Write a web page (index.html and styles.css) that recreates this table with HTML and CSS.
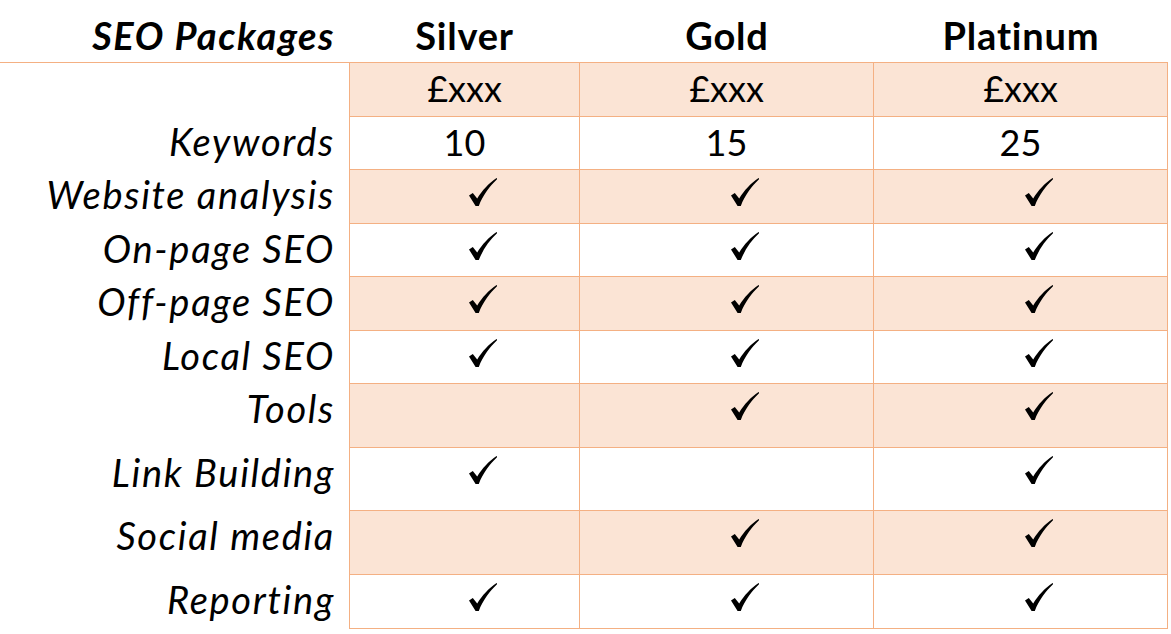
FILE: index.html
```html
<!DOCTYPE html>
<html lang="en">
<head>
<meta charset="utf-8">
<title>SEO Packages</title>
<link rel="stylesheet" href="styles.css">
</head>
<body>
<svg class="defs" width="0" height="0" aria-hidden="true">
  <symbol id="tick" viewBox="0 0 28 28">
    <path d="M0 17.5 L3.8 15 L8.2 20.6 C13 12.5 20 5 27.6 0 L28.4 1 C21 7.8 14.2 16.8 9.8 28 L6.6 28 Z"/>
  </symbol>
</svg>
<table class="pricing">
  <colgroup>
    <col class="col-label">
    <col class="col-silver">
    <col class="col-gold">
    <col class="col-platinum">
  </colgroup>
  <thead>
    <tr class="head">
      <th class="label">SEO Packages</th>
      <th class="plan c1">Silver</th>
      <th class="plan">Gold</th>
      <th class="plan">Platinum</th>
    </tr>
  </thead>
  <tbody>
    <tr class="row shade">
      <td class="label"></td>
      <td class="val c1">£xxx</td><td class="val">£xxx</td><td class="val">£xxx</td>
    </tr>
    <tr class="row">
      <td class="label">Keywords</td>
      <td class="val c1">10</td><td class="val">15</td><td class="val">25</td>
    </tr>
    <tr class="row shade">
      <td class="label">Website analysis</td>
      <td class="val c1"><svg class="check"><use href="#tick"/></svg></td>
      <td class="val"><svg class="check"><use href="#tick"/></svg></td>
      <td class="val"><svg class="check"><use href="#tick"/></svg></td>
    </tr>
    <tr class="row">
      <td class="label">On-page SEO</td>
      <td class="val c1"><svg class="check"><use href="#tick"/></svg></td>
      <td class="val"><svg class="check"><use href="#tick"/></svg></td>
      <td class="val"><svg class="check"><use href="#tick"/></svg></td>
    </tr>
    <tr class="row shade">
      <td class="label">Off-page SEO</td>
      <td class="val c1"><svg class="check"><use href="#tick"/></svg></td>
      <td class="val"><svg class="check"><use href="#tick"/></svg></td>
      <td class="val"><svg class="check"><use href="#tick"/></svg></td>
    </tr>
    <tr class="row">
      <td class="label">Local SEO</td>
      <td class="val c1"><svg class="check"><use href="#tick"/></svg></td>
      <td class="val"><svg class="check"><use href="#tick"/></svg></td>
      <td class="val"><svg class="check"><use href="#tick"/></svg></td>
    </tr>
    <tr class="row tall shade">
      <td class="label">Tools</td>
      <td class="val c1"></td>
      <td class="val"><svg class="check"><use href="#tick"/></svg></td>
      <td class="val"><svg class="check"><use href="#tick"/></svg></td>
    </tr>
    <tr class="row tall">
      <td class="label">Link Building</td>
      <td class="val c1"><svg class="check"><use href="#tick"/></svg></td>
      <td class="val"></td>
      <td class="val"><svg class="check"><use href="#tick"/></svg></td>
    </tr>
    <tr class="row tall shade">
      <td class="label">Social media</td>
      <td class="val c1"></td>
      <td class="val"><svg class="check"><use href="#tick"/></svg></td>
      <td class="val"><svg class="check"><use href="#tick"/></svg></td>
    </tr>
    <tr class="row last">
      <td class="label">Reporting</td>
      <td class="val c1"><svg class="check"><use href="#tick"/></svg></td>
      <td class="val"><svg class="check"><use href="#tick"/></svg></td>
      <td class="val"><svg class="check"><use href="#tick"/></svg></td>
    </tr>
  </tbody>
</table>
</body>
</html>
```

FILE: styles.css
```css
html, body {
  margin: 0;
  padding: 0;
  background: #ffffff;
}

body {
  font-family: Lato, "Open Sans", "Liberation Sans", sans-serif;
  color: #000000;
}

.defs {
  position: absolute;
  width: 0;
  height: 0;
  overflow: hidden;
}

.pricing {
  border-collapse: separate;
  border-spacing: 0;
  table-layout: fixed;
  width: 1168px;
  font-size: 36px;
  line-height: 44px;
}

.col-label { width: 349px; }
.col-silver { width: 231px; }
.col-gold { width: 294px; }
.col-platinum { width: 294px; }

.pricing th,
.pricing td {
  padding: 0;
  vertical-align: top;
  box-sizing: border-box;
}

.head { height: 63px; }

.head th {
  border-bottom: 1px solid #f4b083;
  padding-top: 13px;
  font-size: 38px;
  font-weight: 700;
  letter-spacing: 0.8px;
  text-align: center;
}

.head th.label {
  font-style: italic;
  letter-spacing: 1.5px;
  text-align: right;
  padding-right: 14px;
}

.row { height: 53.5px; }
.row.tall { height: 63.67px; }
.row.last { height: 54px; }

.row td {
  padding-top: 3px;
}

.row td.label {
  font-size: 38px;
  font-style: italic;
  letter-spacing: 1.7px;
  text-align: right;
  padding-top: 2px;
  padding-right: 14px;
  white-space: nowrap;
}

.row td.val {
  text-align: center;
  border-right: 1px solid #f4b083;
  border-bottom: 1px solid #f4b083;
}

.row td.c1 {
  border-left: 1px solid #f4b083;
}

.row.shade td.val {
  background: #fbe4d5;
}

.check {
  display: inline-block;
  width: 28px;
  height: 28px;
  margin-top: 5px;
  margin-left: 36px;
  fill: #000000;
  vertical-align: top;
}
```
